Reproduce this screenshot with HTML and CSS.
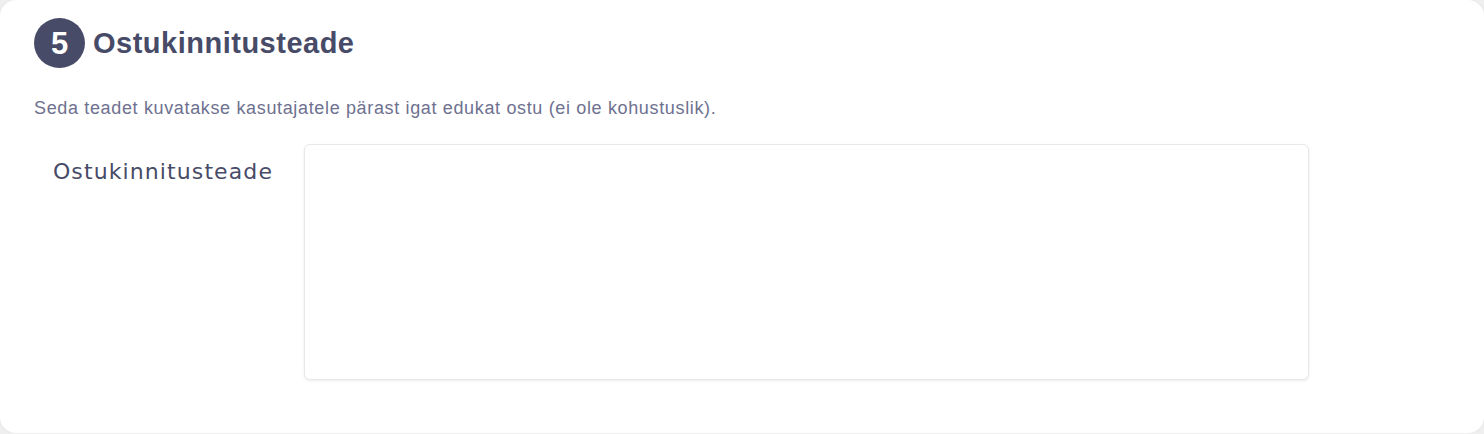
FILE: index.html
```html
<!DOCTYPE html>
<html lang="et">
<head>
<meta charset="utf-8">
<title>Ostukinnitusteade</title>
<link rel="stylesheet" href="styles.css">
</head>
<body>
<section class="card">
  <header class="card-head">
    <span class="step">5</span>
    <h2 class="title">Ostukinnitusteade</h2>
  </header>
  <p class="desc">Seda teadet kuvatakse kasutajatele pärast igat edukat ostu (ei ole kohustuslik).</p>
  <div class="field">
    <label class="field-label" for="msg">Ostukinnitusteade</label>
    <textarea class="field-input" id="msg"></textarea>
  </div>
</section>
</body>
</html>
```
FILE: styles.css
```css
html, body {
  margin: 0;
  padding: 0;
  background: #efeff0;
}
.card {
  box-sizing: border-box;
  width: 1484px;
  height: 433px;
  background: #ffffff;
  border-radius: 16px;
  box-shadow: 0 0 3px rgba(0, 0, 0, 0.06);
  padding: 18px 34px 0 34px;
  font-family: "Liberation Sans", Arial, sans-serif;
}
.card-head {
  display: flex;
  align-items: center;
  gap: 8px;
  height: 50px;
}
.step {
  width: 51px;
  height: 50px;
  border-radius: 50%;
  background: #474b67;
  color: #ffffff;
  font-weight: 700;
  font-size: 31px;
  display: flex;
  align-items: center;
  justify-content: center;
  line-height: 1;
}
.title {
  margin: 0;
  font-size: 29px;
  letter-spacing: 0.5px;
  font-weight: 700;
  color: #474b67;
}
.desc {
  margin: 29px 0 0 0;
  font-size: 18px;
  letter-spacing: 0.65px;
  line-height: 22px;
  color: #6e7190;
}
.field {
  display: flex;
  gap: 12px;
  margin-top: 25px;
}
.field-label {
  width: 258px;
  text-align: center;
  padding-top: 13px;
  font-family: "DejaVu Sans", sans-serif;
  font-size: 22px;
  letter-spacing: 1.1px;
  line-height: 30px;
  color: #474b67;
}
.field-input {
  box-sizing: border-box;
  width: 1005px;
  height: 236px;
  margin: 0;
  border: 1px solid #e8e8ea;
  border-radius: 6px;
  box-shadow: 0 1px 3px rgba(0, 0, 0, 0.08);
  background: #ffffff;
  resize: none;
  outline: none;
}
```
